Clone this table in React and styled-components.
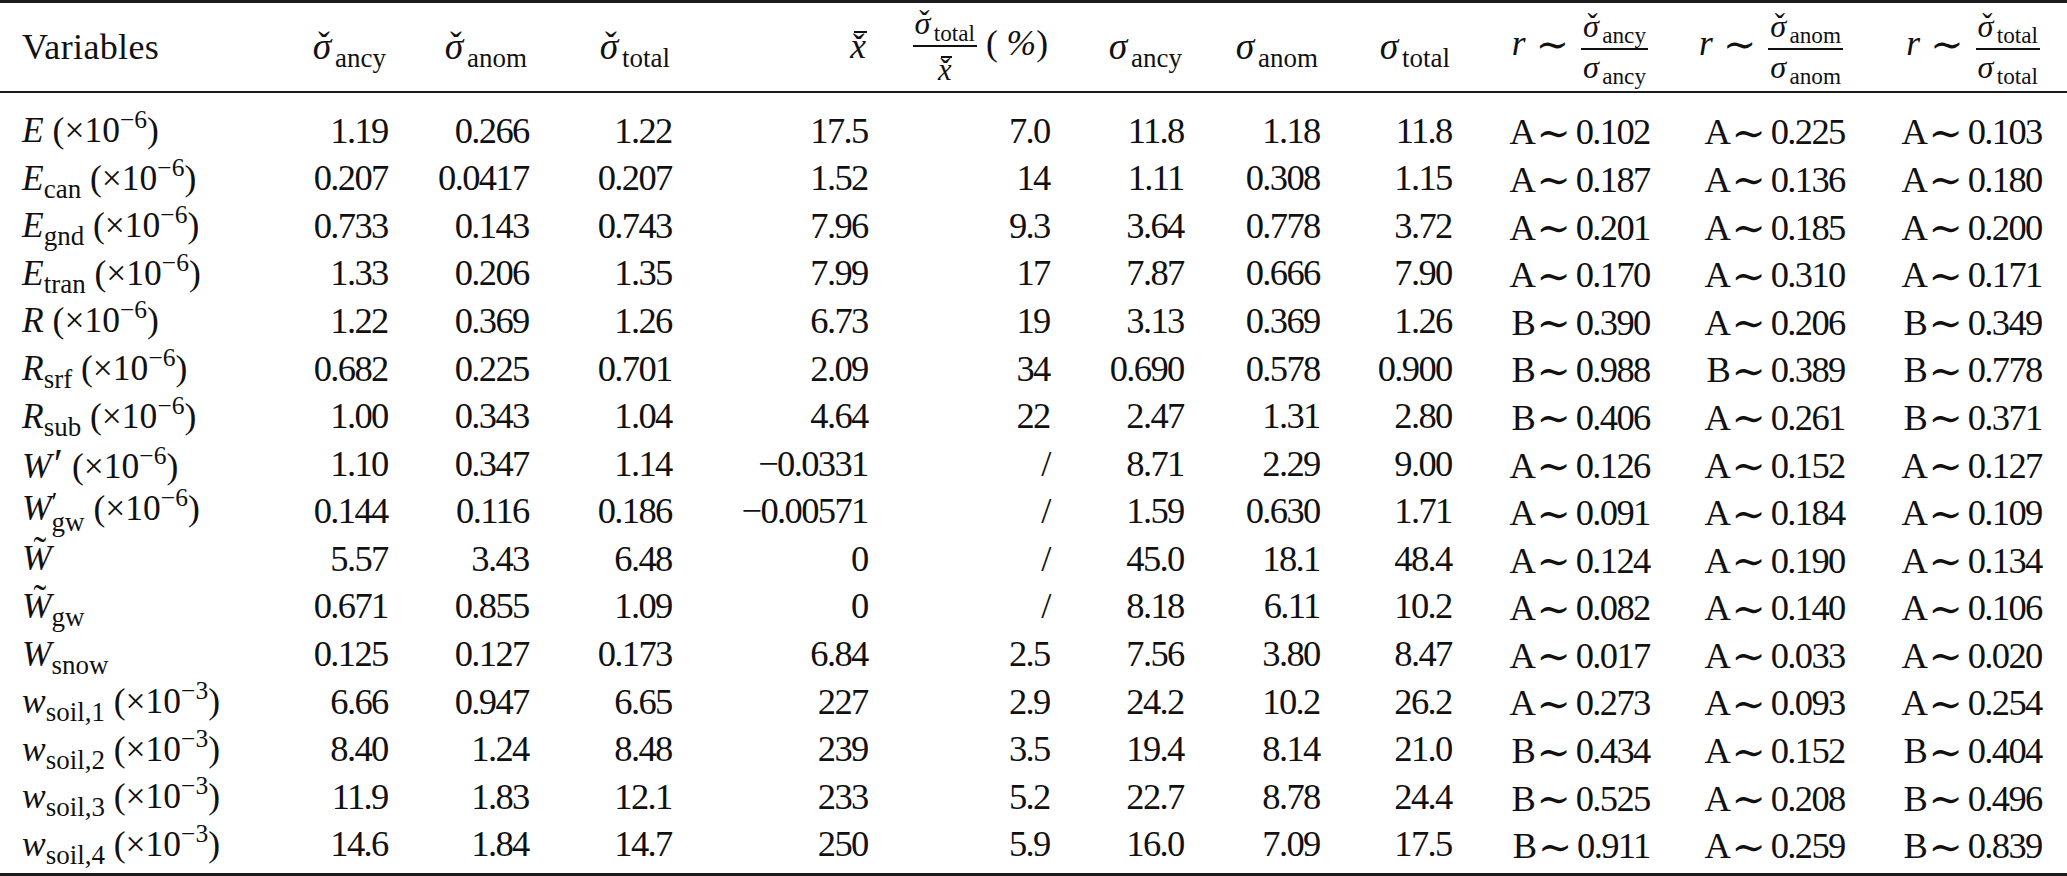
import styled, { createGlobalStyle } from "styled-components";

const GlobalStyle = createGlobalStyle`
  html, body {
    margin: 0;
    padding: 0;
    background: #ffffff;
  }
  body {
    font-family: "Liberation Serif", "Times New Roman", "DejaVu Serif", serif;
    color: #111111;
  }
`;

const columns = "290px 96px 141px 143px 196px 182px 134px 136px 132px 198px 195px 197px";

const TableWrap = styled.div`
  width: 2067px;
  box-sizing: border-box;
  border-top: 3px solid #1c1c1c;
  border-bottom: 3px solid #1c1c1c;
  font-size: 35.5px;
`;

const HeadRow = styled.div`
  display: grid;
  grid-template-columns: ${columns};
  height: 88px;
  align-items: center;
  border-bottom: 2px solid #1c1c1c;
`;

const Body = styled.div`
  padding: 14px 0 4px;
`;

const Row = styled.div`
  display: grid;
  grid-template-columns: ${columns};
  height: 47.6px;
  align-items: center;
`;

const Cell = styled.div`
  white-space: nowrap;
  text-align: ${({ $left }) => ($left ? "left" : "right")};
  padding-left: ${({ $left }) => ($left ? "22px" : "0")};
  line-height: 1;
`;

const Number = styled.span`
  font-size: 36.5px;
  letter-spacing: -0.045em;
  margin-right: -0.045em;
`;

const HeadText = styled.span`
  font-size: 36px;
  letter-spacing: 0.01em;
`;

const It = styled.span`
  font-style: italic;
`;

const Greek = styled.span`
  font-style: italic;
  font-size: 1.06em;
  margin-right: 0.1em;
`;

const Sub = styled.span`
  font-size: 0.76em;
  position: relative;
  top: 0.3em;
  font-style: normal;
`;

const Sup = styled.span`
  font-size: 0.72em;
  position: relative;
  top: -0.55em;
`;

const Stack = styled.span`
  display: inline-flex;
  flex-direction: column;
  vertical-align: 0.32em;
  line-height: 0.72;
  font-size: 0.76em;
`;

const Prime = styled.span`
  font-size: 1.2em;
  margin-left: 0.05em;
`;

const Accented = styled.span`
  position: relative;
  display: inline-block;
  font-style: italic;
`;

const Mark = styled.span`
  position: absolute;
  left: ${({ $left }) => $left};
  top: ${({ $top }) => $top};
  font-size: ${({ $size }) => $size || "1em"};
  font-style: normal;
  line-height: 1;
`;

const Bar = styled.span`
  position: absolute;
  left: 0.1em;
  top: 0.04em;
  width: 0.36em;
  border-top: 2px solid #111;
`;

const Frac = styled.span`
  display: inline-flex;
  flex-direction: column;
  align-items: center;
  vertical-align: middle;
  font-size: 0.86em;
  line-height: 1.05;
`;

const Num = styled.span`
  padding: 0 2px 4px;
  border-bottom: 2px solid #111;
`;

const Den = styled.span`
  padding-top: ${({ $pad }) => $pad || "1px"};
`;

const Sim = styled.span`
  font-family: "DejaVu Serif", serif;
  font-size: 1.12em;
  position: relative;
  top: 0.06em;
  letter-spacing: 0;
  margin: ${({ $spaced }) => ($spaced ? "0 0.3em 0 0.26em" : "0 0.12em 0 0.06em")};
`;

const Percent = styled.span`
  font-style: italic;
`;

const Check = ({ children }) => (
  <Accented>
    {children}
    <Mark $top="0" $left="0.15em">ˇ</Mark>
  </Accented>
);

const Sigma = ({ sub, check }) => (
  <span>
    {check ? (
      <Check>
        <Greek>σ</Greek>
      </Check>
    ) : (
      <Greek>σ</Greek>
    )}
    <Sub>{sub}</Sub>
  </span>
);

const XBar = () => (
  <Accented>
    x
    <Mark $top="0.02em" $left="0.07em">ˇ</Mark>
    <Bar />
  </Accented>
);

const Scale = ({ exp }) => (
  <span>
    {" "}(×10<Sup>−{exp}</Sup>)
  </span>
);

const Label = ({ base, sub, exp, prime, tilde }) => (
  <span>
    {tilde ? (
      <Accented>
        {base}
        <Mark $top="-0.26em" $left="0.3em" $size="1.08em">˜</Mark>
      </Accented>
    ) : (
      <It>{base}</It>
    )}
    {prime && sub ? (
      <Stack>
        <span>′</span>
        <span>{sub}</span>
      </Stack>
    ) : (
      <>
        {prime && <Prime>′</Prime>}
        {sub && <Sub>{sub}</Sub>}
      </>
    )}
    {exp && <Scale exp={exp} />}
  </span>
);

const RHead = ({ sub }) => (
  <span>
    <It>r</It>
    <Sim $spaced>∼</Sim>
    <Frac>
      <Num>
        <Sigma sub={sub} check />
      </Num>
      <Den>
        <Sigma sub={sub} />
      </Den>
    </Frac>
  </span>
);

const rows = [
  [{ base: "E", exp: 6 }, ["1.19", "0.266", "1.22", "17.5", "7.0", "11.8", "1.18", "11.8", "A 0.102", "A 0.225", "A 0.103"]],
  [{ base: "E", sub: "can", exp: 6 }, ["0.207", "0.0417", "0.207", "1.52", "14", "1.11", "0.308", "1.15", "A 0.187", "A 0.136", "A 0.180"]],
  [{ base: "E", sub: "gnd", exp: 6 }, ["0.733", "0.143", "0.743", "7.96", "9.3", "3.64", "0.778", "3.72", "A 0.201", "A 0.185", "A 0.200"]],
  [{ base: "E", sub: "tran", exp: 6 }, ["1.33", "0.206", "1.35", "7.99", "17", "7.87", "0.666", "7.90", "A 0.170", "A 0.310", "A 0.171"]],
  [{ base: "R", exp: 6 }, ["1.22", "0.369", "1.26", "6.73", "19", "3.13", "0.369", "1.26", "B 0.390", "A 0.206", "B 0.349"]],
  [{ base: "R", sub: "srf", exp: 6 }, ["0.682", "0.225", "0.701", "2.09", "34", "0.690", "0.578", "0.900", "B 0.988", "B 0.389", "B 0.778"]],
  [{ base: "R", sub: "sub", exp: 6 }, ["1.00", "0.343", "1.04", "4.64", "22", "2.47", "1.31", "2.80", "B 0.406", "A 0.261", "B 0.371"]],
  [{ base: "W", prime: true, exp: 6 }, ["1.10", "0.347", "1.14", "−0.0331", "/", "8.71", "2.29", "9.00", "A 0.126", "A 0.152", "A 0.127"]],
  [{ base: "W", prime: true, sub: "gw", exp: 6 }, ["0.144", "0.116", "0.186", "−0.00571", "/", "1.59", "0.630", "1.71", "A 0.091", "A 0.184", "A 0.109"]],
  [{ base: "W", tilde: true }, ["5.57", "3.43", "6.48", "0", "/", "45.0", "18.1", "48.4", "A 0.124", "A 0.190", "A 0.134"]],
  [{ base: "W", tilde: true, sub: "gw" }, ["0.671", "0.855", "1.09", "0", "/", "8.18", "6.11", "10.2", "A 0.082", "A 0.140", "A 0.106"]],
  [{ base: "W", sub: "snow" }, ["0.125", "0.127", "0.173", "6.84", "2.5", "7.56", "3.80", "8.47", "A 0.017", "A 0.033", "A 0.020"]],
  [{ base: "w", sub: "soil,1", exp: 3 }, ["6.66", "0.947", "6.65", "227", "2.9", "24.2", "10.2", "26.2", "A 0.273", "A 0.093", "A 0.254"]],
  [{ base: "w", sub: "soil,2", exp: 3 }, ["8.40", "1.24", "8.48", "239", "3.5", "19.4", "8.14", "21.0", "B 0.434", "A 0.152", "B 0.404"]],
  [{ base: "w", sub: "soil,3", exp: 3 }, ["11.9", "1.83", "12.1", "233", "5.2", "22.7", "8.78", "24.4", "B 0.525", "A 0.208", "B 0.496"]],
  [{ base: "w", sub: "soil,4", exp: 3 }, ["14.6", "1.84", "14.7", "250", "5.9", "16.0", "7.09", "17.5", "B 0.911", "A 0.259", "B 0.839"]],
];

const Value = ({ text }) => {
  const parts = text.split(" ");
  if (parts.length === 2) {
    return (
      <Number>
        {parts[0]}
        <Sim>∼</Sim>
        {parts[1]}
      </Number>
    );
  }
  return <Number>{text}</Number>;
};

export default function App() {
  return (
    <>
      <GlobalStyle />
      <TableWrap>
        <HeadRow>
          <Cell $left>
            <HeadText>Variables</HeadText>
          </Cell>
          <Cell><Sigma sub="ancy" check /></Cell>
          <Cell><Sigma sub="anom" check /></Cell>
          <Cell><Sigma sub="total" check /></Cell>
          <Cell><XBar /></Cell>
          <Cell>
            <Frac>
              <Num><Sigma sub="total" check /></Num>
              <Den $pad="7px"><XBar /></Den>
            </Frac>{" "}( <Percent>%</Percent>)
          </Cell>
          <Cell><Sigma sub="ancy" /></Cell>
          <Cell><Sigma sub="anom" /></Cell>
          <Cell><Sigma sub="total" /></Cell>
          <Cell><RHead sub="ancy" /></Cell>
          <Cell><RHead sub="anom" /></Cell>
          <Cell><RHead sub="total" /></Cell>
        </HeadRow>
        <Body>
          {rows.map(([label, values], i) => (
            <Row key={i}>
              <Cell $left><Label {...label} /></Cell>
              {values.map((v, j) => (
                <Cell key={j}><Value text={v} /></Cell>
              ))}
            </Row>
          ))}
        </Body>
      </TableWrap>
    </>
  );
}
